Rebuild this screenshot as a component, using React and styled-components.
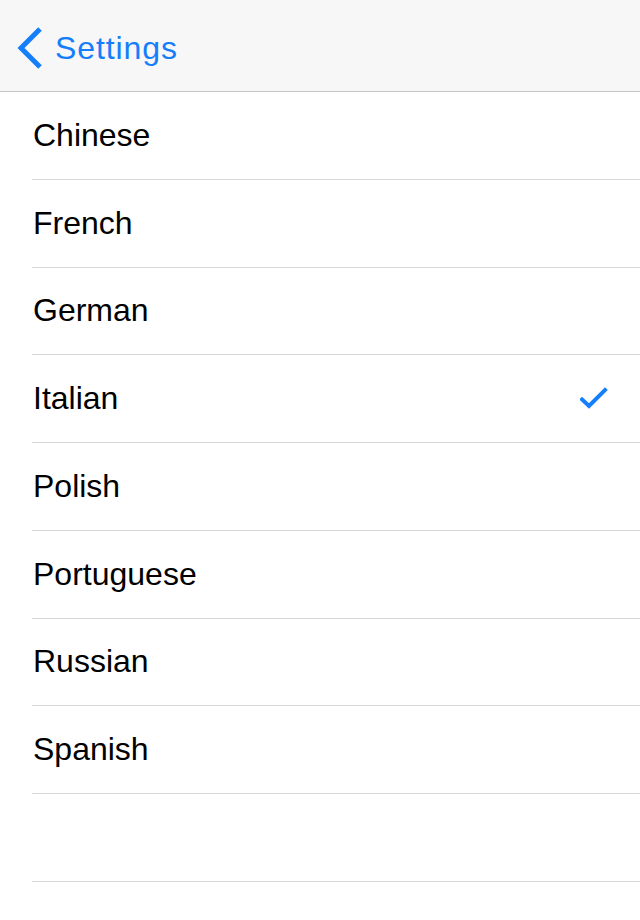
import React, { useState } from 'react';
import styled, { createGlobalStyle } from 'styled-components';

const GlobalStyle = createGlobalStyle`
  html, body {
    margin: 0;
    padding: 0;
    background: #fff;
    font-family: "Liberation Sans", Arial, sans-serif;
  }
`;

const Page = styled.div`
  width: 640px;
  min-height: 920px;
  background: #fff;
`;

const NavBar = styled.div`
  height: 91px;
  background: #f7f7f7;
  border-bottom: 1px solid #c4c4c4;
  display: flex;
  align-items: center;
`;

const BackButton = styled.button`
  display: flex;
  align-items: center;
  gap: 11px;
  border: 0;
  background: none;
  padding: 0 0 0 16px;
  margin-top: 5px;
  color: #157efb;
  font-family: inherit;
  font-size: 32px;
  letter-spacing: 0.9px;
  cursor: pointer;
`;

const List = styled.ul`
  list-style: none;
  margin: 0;
  padding: 0 0 0 32px;
`;

const Row = styled.li`
  height: 86.75px;
  border-bottom: 1px solid #d8d8d8;
  display: flex;
  align-items: center;
  justify-content: space-between;
  padding-right: 32px;
  font-size: 32px;
  color: #000;
`;

const Label = styled.span`
  padding-left: 1px;
`;

const Check = ({ visible }) => (
  <svg width="28" height="24" viewBox="0 0 28 24" style={{ visibility: visible ? 'visible' : 'hidden' }}>
    <path d="M2 12.5 L9 19 L25 3" fill="none" stroke="#157efb" strokeWidth="4" strokeLinecap="square" />
  </svg>
);

const languages = ['Chinese', 'French', 'German', 'Italian', 'Polish', 'Portuguese', 'Russian', 'Spanish', ''];

export default function App() {
  const [selected, setSelected] = useState('Italian');

  return (
    <Page>
      <GlobalStyle />
      <NavBar>
        <BackButton>
          <svg width="28" height="44" viewBox="0 0 28 44">
            <path d="M24 3 L5 22 L24 41" fill="none" stroke="#157efb" strokeWidth="5" />
          </svg>
          Settings
        </BackButton>
      </NavBar>
      <List>
        {languages.map((lang, i) => (
          <Row key={i} onClick={() => lang && setSelected(lang)}>
            <Label>{lang}</Label>
            {lang && <Check visible={selected === lang} />}
          </Row>
        ))}
      </List>
    </Page>
  );
}
